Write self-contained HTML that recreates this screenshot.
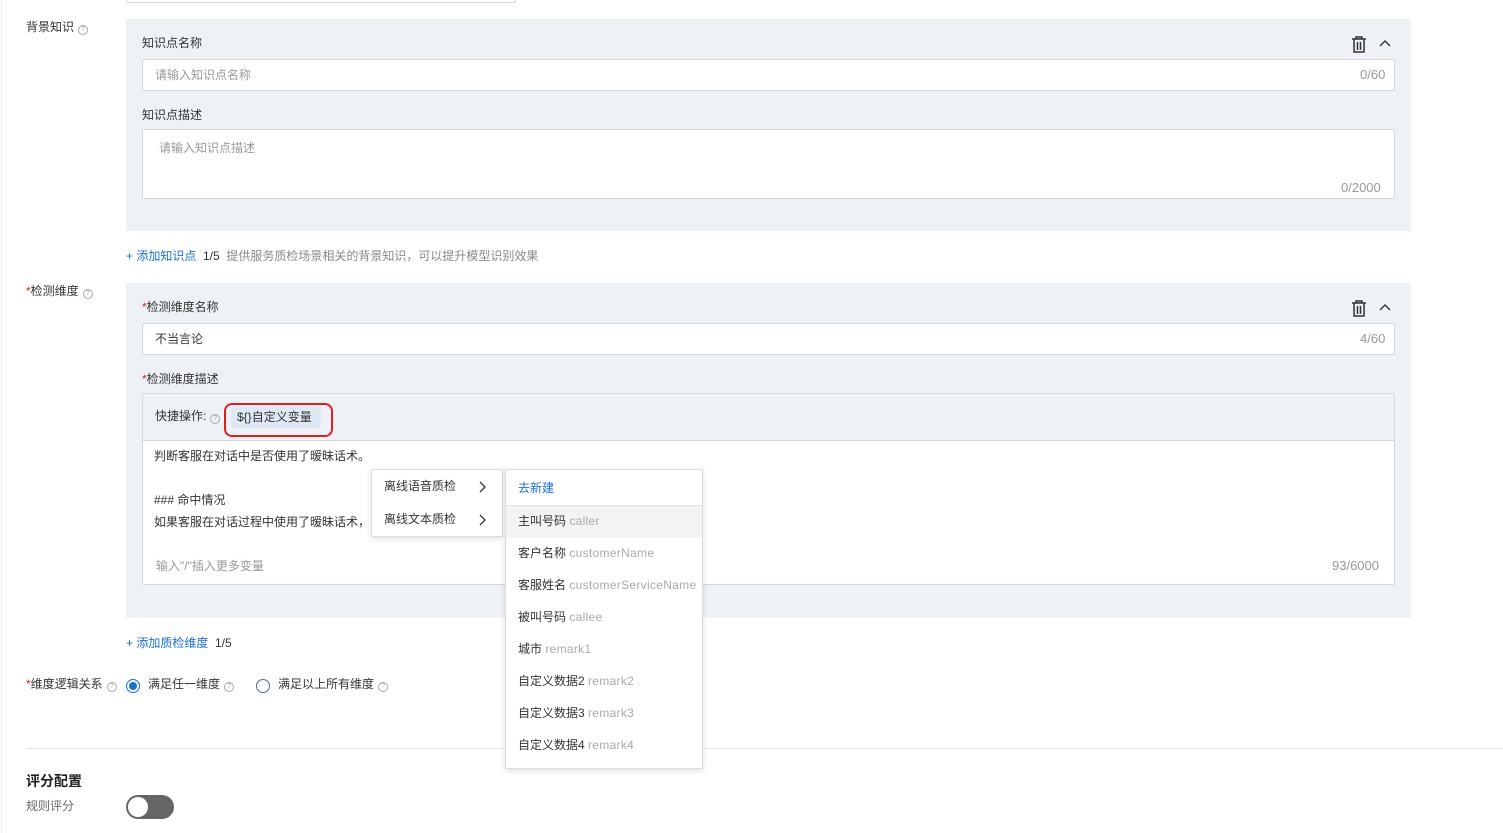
<!DOCTYPE html>
<html><head><meta charset="utf-8"><style>
*{box-sizing:border-box;margin:0;padding:0}
body{width:1503px;height:833px;overflow:hidden;background:#fff;font-family:"Liberation Sans","Noto Sans CJK SC",sans-serif;font-size:12px;line-height:15px;color:#333;position:relative}
.a{position:absolute;white-space:nowrap}
.panel{position:absolute;background:#eef1f6}
.inp{position:absolute;background:#fff;border:1px solid #d4d8de;border-radius:2px}
.ph{color:#999}
.q{display:inline-block;width:10px;height:10px;border:1px solid #aaa;border-radius:50%;font-size:7px;line-height:8px;text-align:center;color:#aaa;vertical-align:0px;margin-left:4px}
.blue{color:#1a6fd6}
.red{color:#e02020}
.menu{position:absolute;background:#fff;border:1px solid #dcdcdc;box-shadow:0 2px 6px rgba(0,0,0,.12)}
.mi{position:absolute;left:12px;white-space:nowrap;color:#333}
.mi span{color:#aaa;letter-spacing:0.3px}
</style></head><body>
<div class="a" style="left:1px;top:0;width:1px;height:833px;background:#eee"></div>
<div class="inp" style="left:126px;top:-10px;width:390px;height:13px"></div>

<div class="a" style="left:26px;top:20px">背景知识<span class="q">?</span></div>
<div class="panel" style="left:126px;top:19px;width:1285px;height:212px"></div>
<div class="a" style="left:142px;top:36px">知识点名称</div>
<svg class="a" style="left:1351px;top:36px" width="16" height="17" viewBox="0 0 16 17"><path d="M1 3h14M5 3V1h6v2M3 3v13h10V3M6.5 6v8M9.5 6v8" stroke="#333" stroke-width="1.5" fill="none"/></svg>
<svg class="a" style="left:1379px;top:39px" width="12" height="8" viewBox="0 0 12 8"><path d="M1 7l5-5 5 5" stroke="#333" stroke-width="1.4" fill="none"/></svg>
<div class="inp" style="left:142px;top:59px;width:1253px;height:32px"></div>
<div class="a ph" style="left:155px;top:68px">请输入知识点名称</div>
<div class="a ph" style="left:1360px;top:67px;font-size:13px">0/60</div>
<div class="a" style="left:142px;top:108px">知识点描述</div>
<div class="inp" style="left:142px;top:129px;width:1253px;height:70px"></div>
<div class="a ph" style="left:159px;top:141px">请输入知识点描述</div>
<div class="a ph" style="left:1341px;top:180px;font-size:13px">0/2000</div>
<div class="a" style="left:126px;top:249px"><span class="blue">+ 添加知识点</span>&nbsp; 1/5 &nbsp;<span style="color:#888">提供服务质检场景相关的背景知识，可以提升模型识别效果</span></div>

<div class="a" style="left:26px;top:284px"><span class="red">*</span>检测维度<span class="q">?</span></div>
<div class="panel" style="left:126px;top:283px;width:1285px;height:335px"></div>
<div class="a" style="left:142px;top:300px"><span class="red">*</span>检测维度名称</div>
<svg class="a" style="left:1351px;top:300px" width="16" height="17" viewBox="0 0 16 17"><path d="M1 3h14M5 3V1h6v2M3 3v13h10V3M6.5 6v8M9.5 6v8" stroke="#333" stroke-width="1.5" fill="none"/></svg>
<svg class="a" style="left:1379px;top:303px" width="12" height="8" viewBox="0 0 12 8"><path d="M1 7l5-5 5 5" stroke="#333" stroke-width="1.4" fill="none"/></svg>
<div class="inp" style="left:142px;top:323px;width:1253px;height:32px"></div>
<div class="a" style="left:155px;top:332px">不当言论</div>
<div class="a ph" style="left:1360px;top:331px;font-size:13px">4/60</div>
<div class="a" style="left:142px;top:372px"><span class="red">*</span>检测维度描述</div>
<div class="inp" style="left:142px;top:393px;width:1253px;height:192px;background:#fff"></div>
<div class="a" style="left:143px;top:394px;width:1251px;height:47px;background:#eef1f6;border-bottom:1px solid #d4d8de"></div>
<div class="a" style="left:155px;top:409px">快捷操作:<span class="q">?</span></div>
<div class="a" style="left:231px;top:407px;width:90px;height:21px;background:#dfe8f5;border-radius:3px;padding:3px 6px">${}自定义变量</div>
<div class="a" style="left:224px;top:403px;width:109px;height:34px;border:2px solid #e02020;border-radius:8px"></div>
<div class="a" style="left:154px;top:449px">判断客服在对话中是否使用了暧昧话术。</div>
<div class="a" style="left:154px;top:493px">### 命中情况</div>
<div class="a" style="left:154px;top:515px">如果客服在对话过程中使用了暧昧话术，</div>
<div class="a ph" style="left:156px;top:559px">输入"/"插入更多变量</div>
<div class="a ph" style="left:1332px;top:558px;font-size:13px">93/6000</div>

<div class="a" style="left:126px;top:636px"><span class="blue">+ 添加质检维度</span>&nbsp; 1/5</div>
<div class="a" style="left:26px;top:677px"><span class="red">*</span>维度逻辑关系<span class="q">?</span></div>
<div class="a" style="left:126px;top:679px;width:14px;height:14px;border:1px solid #1a6fd6;border-radius:50%"><div style="margin:2px;width:8px;height:8px;border-radius:50%;background:#1a6fd6"></div></div>
<div class="a" style="left:148px;top:677px">满足任一维度<span class="q">?</span></div>
<div class="a" style="left:256px;top:679px;width:14px;height:14px;border:1px solid #5a6a80;border-radius:50%"></div>
<div class="a" style="left:278px;top:677px">满足以上所有维度<span class="q">?</span></div>
<div class="a" style="left:26px;top:748px;width:1477px;height:1px;background:#e3e3e3"></div>
<div class="a" style="left:26px;top:774px;font-size:14px;font-weight:bold;color:#222">评分配置</div>
<div class="a" style="left:26px;top:799px;color:#666">规则评分</div>
<div class="a" style="left:126px;top:795px;width:48px;height:24px;border-radius:12px;background:#666"><div style="position:absolute;left:2px;top:2px;width:20px;height:20px;border-radius:50%;background:#fff"></div></div>

<div class="menu" style="left:371px;top:469px;width:132px;height:68px">
<div class="mi" style="top:9px">离线语音质检</div><svg class="a" style="left:107px;top:11px" width="8" height="12"><path d="M1 1l5 5-5 5" stroke="#333" stroke-width="1.3" fill="none"/></svg>
<div class="mi" style="top:42px">离线文本质检</div><svg class="a" style="left:107px;top:44px" width="8" height="12"><path d="M1 1l5 5-5 5" stroke="#333" stroke-width="1.3" fill="none"/></svg>
</div>
<div class="menu" style="left:505px;top:469px;width:198px;height:300px">
<div class="mi blue" style="top:11px;color:#1a6fd6">去新建</div>
<div class="a" style="left:0;top:35px;width:196px;height:1px;background:#e5e5e5"></div>
<div class="a" style="left:0;top:36px;width:196px;height:32px;background:#f3f3f3"></div>
<div class="mi" style="top:44px">主叫号码 <span>caller</span></div>
<div class="mi" style="top:76px">客户名称 <span>customerName</span></div>
<div class="mi" style="top:108px">客服姓名 <span>customerServiceName</span></div>
<div class="mi" style="top:140px">被叫号码 <span>callee</span></div>
<div class="mi" style="top:172px">城市 <span>remark1</span></div>
<div class="mi" style="top:204px">自定义数据2 <span>remark2</span></div>
<div class="mi" style="top:236px">自定义数据3 <span>remark3</span></div>
<div class="mi" style="top:268px">自定义数据4 <span>remark4</span></div>
</div>
</body></html>
